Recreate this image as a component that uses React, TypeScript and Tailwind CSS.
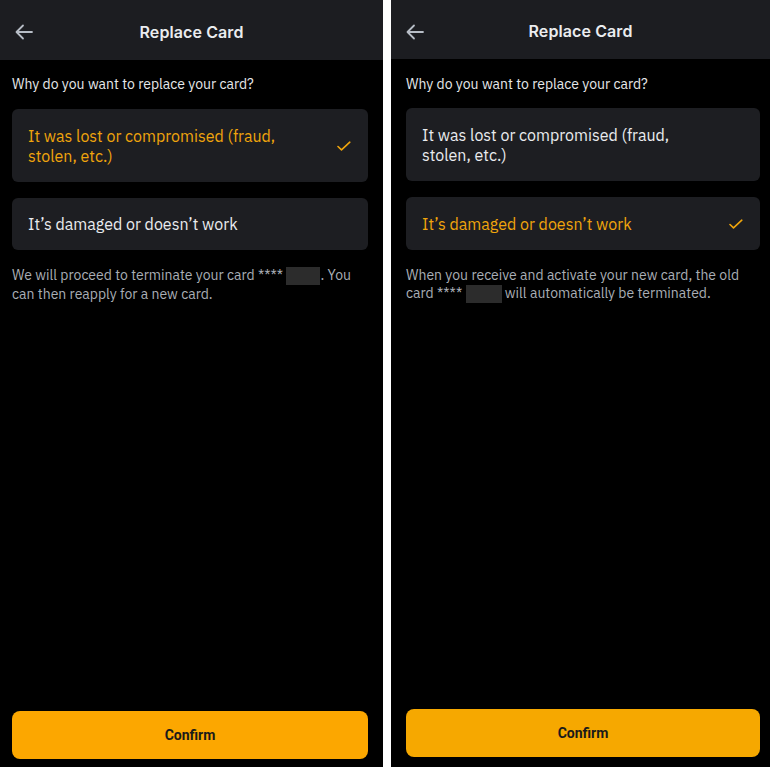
import React from "react";

const font = { fontFamily: "'IBM Plex Sans', 'Noto Sans', Inter, sans-serif" };

function Arrow() {
  return (
    <svg width="18" height="16" viewBox="0 0 18 16" fill="none">
      <path d="M17 8H2M8 1.5L1.5 8 8 14.5" stroke="#b7bdc6" strokeWidth="1.8" strokeLinecap="round" strokeLinejoin="round" />
    </svg>
  );
}

function Check() {
  return (
    <svg width="14" height="10" viewBox="0 0 14 10" fill="none">
      <path d="M1 5.5L4.5 8.8 12.8 1.2" stroke="#f0a50c" strokeWidth="1.6" strokeLinecap="round" strokeLinejoin="round" />
    </svg>
  );
}

function Panel({
  selected,
  desc,
  widthClass,
  top,
}: {
  selected: 0 | 1;
  desc: React.ReactNode;
  widthClass: string;
  top: number;
}) {
  return (
    <div className={`${widthClass} h-full bg-black flex flex-col shrink-0`} style={font}>
      <div className={`${top === 0 ? "h-[60px]" : "h-[59px]"} bg-[#1c1d21] relative flex items-center justify-center pt-[3px]`}>
        <div className="absolute left-[15px] top-[24px]">
          <Arrow />
        </div>
        <div className="text-[16px] font-semibold text-[#eaecef] tracking-[0.1px]" style={{ fontFamily: "Inter, sans-serif" }}>
          Replace Card
        </div>
      </div>
      <div className={`flex-1 flex flex-col ${top === 0 ? "pl-3 pr-[15px]" : "pl-[15px] pr-[10px]"}`}>
        <div className={`${top === 0 ? "mt-[14px]" : "mt-[15px]"} text-[14px] leading-[20px] text-[#e6e8ea]`}>
          Why do you want to replace your card?
        </div>
        <div className={`${top === 0 ? "mt-[15px]" : "mt-[14px]"} h-[73px] rounded-[6px] bg-[#1d1e22] flex items-center pl-4 pr-[17px]`}>
          <div className={`flex-1 text-[16px] leading-[20px] font-normal ${selected === 0 ? "text-[#f0a50c]" : "text-[#eaecef]"}`}>
            It was lost or compromised (fraud,
            <br />
            stolen, etc.)
          </div>
          {selected === 0 && <Check />}
        </div>
        <div className={`mt-4 ${top === 0 ? "h-[52px]" : "h-[53px]"} rounded-[6px] bg-[#1d1e22] flex items-center pl-4 pr-[17px]`}>
          <div className={`flex-1 text-[16px] leading-[20px] font-normal ${selected === 1 ? "text-[#f0a50c]" : "text-[#eaecef]"}`}>
            It’s damaged or doesn’t work
          </div>
          {selected === 1 && <Check />}
        </div>
        <div className="mt-[16px] text-[14px] leading-[18px] text-[#a9aeb5]">{desc}</div>
        <div className="flex-1" />
        <button
          className={`${top === 0 ? "mb-[8px] bg-[#fca700]" : "mb-[10px] bg-[#f6a800]"} h-[48px] w-full rounded-[8px] text-[14px] font-bold text-[#1a1a1a]`}
          style={{ fontFamily: "Roboto, sans-serif" }}
        >
          Confirm
        </button>
      </div>
    </div>
  );
}

function Mask({ w }: { w: number }) {
  return (
    <span
      className="inline-block align-top h-[18px] bg-[#2c2c2c] mt-[1px]"
      style={{ width: w }}
    />
  );
}

export default function App() {
  return (
    <div className="w-[770px] h-[767px] flex bg-white overflow-hidden">
      <Panel
        selected={0}
        widthClass="w-[383px]"
        top={0}
        desc={
          <>
            We will proceed to terminate your card **** <Mask w={34} />. You can then reapply for a new card.
          </>
        }
      />
      <div className="w-[8px] shrink-0 bg-white" />
      <Panel
        selected={1}
        widthClass="w-[379px]"
        top={1}
        desc={
          <>
            When you receive and activate your new card, the old card **** <Mask w={36} /> will automatically be terminated.
          </>
        }
      />
    </div>
  );
}
